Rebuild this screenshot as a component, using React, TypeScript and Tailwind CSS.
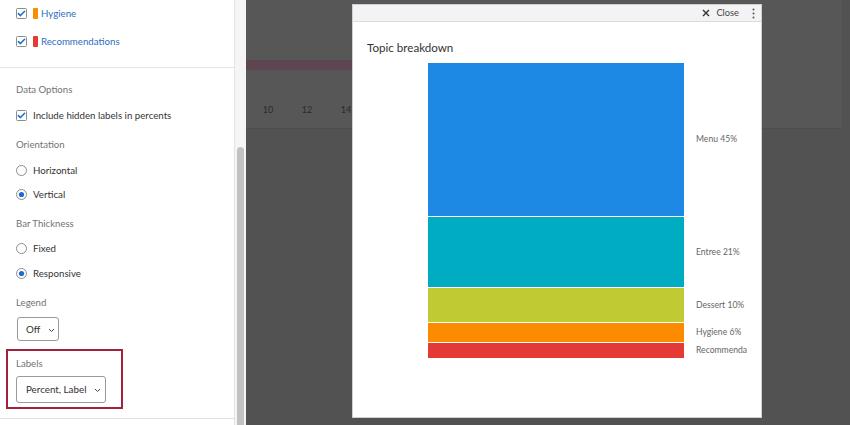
import React from 'react';

const font = { fontFamily: 'Lato, "Open Sans", "Liberation Sans", sans-serif' };

const CheckBox: React.FC = () => (
    <svg width="11" height="11" viewBox="0 0 11 11" className="shrink-0">
        <rect x="0.5" y="0.5" width="10" height="10" rx="1" fill="#fff" stroke="#8c8c8c" />
        <path d="M2.4 5.6 L4.5 7.6 L8.6 3.2" fill="none" stroke="#1a6bd1" strokeWidth="1.5" strokeLinecap="round" strokeLinejoin="round" />
    </svg>
);

const Radio: React.FC<{ on?: boolean }> = ({ on }) => (
    <svg width="11" height="11" viewBox="0 0 11 11" className="shrink-0">
        <circle cx="5.5" cy="5.5" r="5" fill="#fff" stroke="#8c8c8c" />
        {on && <circle cx="5.5" cy="5.5" r="2.6" fill="#1a6bd1" />}
    </svg>
);

const Chevron: React.FC = () => (
    <svg width="7" height="5" viewBox="0 0 7 5" className="shrink-0 mt-[2px]">
        <path d="M1 1 L3.5 3.5 L6 1" fill="none" stroke="#444" strokeWidth="1" />
    </svg>
);

const segments = [
    { label: 'Menu 45%', color: 'bg-[#1e88e5]', h: 'h-[153px]' },
    { label: 'Entree 21%', color: 'bg-[#00acc1]', h: 'h-[70px]' },
    { label: 'Dessert 10%', color: 'bg-[#c0ca33]', h: 'h-[34px]' },
    { label: 'Hygiene 6%', color: 'bg-[#fb8c00]', h: 'h-[19px]' },
    { label: 'Recommendations 4%', color: 'bg-[#e53935]', h: 'h-[15px]' },
];

export default function App() {
    return (
        <div className="w-[850px] h-[425px] flex overflow-hidden bg-[#525252]" style={font}>
            {/* Settings panel */}
            <div className="w-[234px] h-full bg-white flex flex-col shrink-0">
                <div className="flex flex-col border-b border-[#e6e6e6] pb-[13px]">
                    <div className="h-[26px] flex items-center pl-[16px]">
                        <CheckBox />
                        <span className="ml-[6px] w-[5px] h-[11px] rounded-[1px] bg-[#fb8c00]" />
                        <span className="ml-[3px] text-[9.7px] text-[#2d6fc0]">Hygiene</span>
                    </div>
                    <div className="h-[26px] mt-[2px] flex items-center pl-[16px]">
                        <CheckBox />
                        <span className="ml-[6px] w-[5px] h-[11px] rounded-[1px] bg-[#e53935]" />
                        <span className="ml-[3px] text-[9.7px] text-[#2d6fc0]">Recommendations</span>
                    </div>
                </div>

                <div className="h-[20px] mt-[12px] flex items-center pl-[16px] text-[9.6px] text-[#737373]">Data Options</div>
                <div className="h-[20px] mt-[5px] flex items-center pl-[16px] gap-[6px]">
                    <CheckBox />
                    <span className="text-[9.7px] text-[#333]">Include hidden labels in percents</span>
                </div>

                <div className="h-[20px] mt-[10px] flex items-center pl-[16px] text-[9.6px] text-[#737373]">Orientation</div>
                <div className="h-[20px] mt-[5px] flex items-center pl-[16px] gap-[6px]">
                    <Radio />
                    <span className="text-[9.7px] text-[#333]">Horizontal</span>
                </div>
                <div className="h-[20px] mt-[4px] flex items-center pl-[16px] gap-[6px]">
                    <Radio on />
                    <span className="text-[9.7px] text-[#333]">Vertical</span>
                </div>

                <div className="h-[20px] mt-[10px] flex items-center pl-[16px] text-[9.6px] text-[#737373]">Bar Thickness</div>
                <div className="h-[20px] mt-[4px] flex items-center pl-[16px] gap-[6px]">
                    <Radio />
                    <span className="text-[9.7px] text-[#333]">Fixed</span>
                </div>
                <div className="h-[20px] mt-[5px] flex items-center pl-[16px] gap-[6px]">
                    <Radio on />
                    <span className="text-[9.7px] text-[#333]">Responsive</span>
                </div>

                <div className="h-[20px] mt-[10px] flex items-center pl-[16px] text-[9.6px] text-[#737373]">Legend</div>
                <div className="ml-[17px] mt-[4px] w-[42px] h-[24px] border border-[#9a9a9a] rounded-[3px] flex items-center pl-[8px] gap-[8px] text-[9.8px] text-[#333]">
                    Off <Chevron />
                </div>

                <div className="ml-[6px] mt-[8px] w-[117px] h-[60px] border-2 border-[#a3213a] flex flex-col pt-[3px]">
                    <div className="h-[20px] flex items-center pl-[8px] text-[9.6px] text-[#737373]">Labels</div>
                    <div className="ml-[8px] mt-[2px] w-[90px] h-[27px] border border-[#9a9a9a] rounded-[3px] flex items-center pl-[9px] gap-[8px] text-[9.8px] text-[#333]">
                        Percent, Label <Chevron />
                    </div>
                </div>

                <div className="mt-[9px] border-t border-[#e0e0e0]" />
            </div>

            {/* Scrollbar */}
            <div className="w-[12px] h-full bg-[#f5f5f5] border-l border-[#e4e4e4] flex flex-col items-center shrink-0">
                <div className="mt-[147px] w-[7px] flex-1 rounded-t-[4px] bg-[#c2c2c2]" />
            </div>

            {/* Dimmed report area */}
            <div className="flex-1 h-full relative">
                <div className="w-[596px] h-[129px] bg-[#575757] border-b border-[#4d4d4d] flex flex-col">
                    <div className="mt-[60px] w-[110px] h-[10px] bg-[#5d4552]" />
                    <div className="mt-[33px] pl-[16px] flex gap-[27px] text-[9px] text-[#2a2a2a]">
                        <span className="w-[12px] text-center">10</span>
                        <span className="w-[12px] text-center">12</span>
                        <span className="w-[12px] text-center">14</span>
                    </div>
                </div>

                {/* Modal */}
                <div className="absolute left-[106px] top-[4px] w-[410px] h-[414px] bg-white border border-[#cfcfcf] flex flex-col">
                    <div className="h-[17px] bg-[#f3f3f5] border-b border-[#dcdcdc] flex items-center justify-end pr-[6px] text-[9.3px] text-[#444]">
                        <svg width="8" height="8" viewBox="0 0 8 8" className="mr-[6px]">
                            <path d="M1 1 L7 7 M7 1 L1 7" stroke="#333" strokeWidth="1.4" />
                        </svg>
                        <span>Close</span>
                        <svg width="3" height="11" viewBox="0 0 3 11" className="ml-[13px]">
                            <circle cx="1.5" cy="1.5" r="1" fill="#555" />
                            <circle cx="1.5" cy="5.5" r="1" fill="#555" />
                            <circle cx="1.5" cy="9.5" r="1" fill="#555" />
                        </svg>
                    </div>
                    <div className="pl-[14px] mt-[18px] text-[11.6px] text-[#333] leading-[16px]">Topic breakdown</div>
                    <div className="mt-[7px] ml-[75px] flex flex-col gap-px">
                        {segments.map((s, i) => (
                            <div key={i} className="flex items-center">
                                <div className={`w-[256px] ${s.h} ${s.color}`} />
                                <span className="ml-[12px] w-[51px] overflow-hidden whitespace-nowrap text-[8.6px] text-[#666]">{s.label}</span>
                            </div>
                        ))}
                    </div>
                </div>
            </div>
        </div>
    );
}
